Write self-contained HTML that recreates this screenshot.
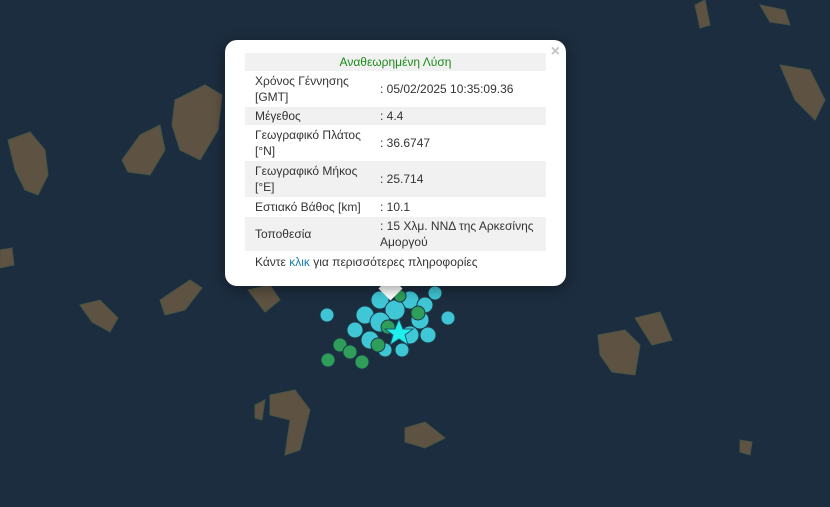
<!DOCTYPE html>
<html><head><meta charset="utf-8"><style>
body{margin:0;width:830px;height:507px;overflow:hidden;background:#1d3044;font-family:"Liberation Sans",Arial,sans-serif;}
#map{position:absolute;left:0;top:0}
.pop{position:absolute;left:225px;top:40px;width:341px;height:246px;background:#fff;border-radius:12px;box-shadow:0 3px 14px rgba(0,0,0,.4);}
.tip{position:absolute;left:382px;top:280px;width:17px;height:17px;background:#fff;transform:rotate(45deg);}
.x{position:absolute;right:6px;top:3px;color:#c3c3c3;font-size:16px;font-weight:bold}
table{position:absolute;left:20px;top:13px;width:301px;border-collapse:collapse;font-size:12px;color:#333;line-height:16px;table-layout:fixed}
td{padding:1px 0 1px 10px;vertical-align:middle}
tr.g td{background:#f1f1f1}
.h{text-align:center;color:#1a8a1a;height:16px;padding-left:0}
.foot{position:absolute;left:30px;top:215px;font-size:12px;color:#333}
.foot span{color:#1a7fa8}
</style></head><body>
<svg id="map" width="830" height="507">
<rect width="830" height="507" fill="#1c2d3f"/>
<g fill="#5e5242" stroke="#465444" stroke-width="1">
<path d="M8 140 L30 132 L45 150 L48 175 L38 195 L25 190 L15 170Z"/>
<path d="M175 100 L205 85 L222 95 L218 130 L200 160 L180 150 L172 125Z"/>
<path d="M140 135 L160 125 L165 150 L150 175 L128 172 L122 160Z"/>
<path d="M80 305 L100 300 L118 318 L110 332 L92 322Z"/>
<path d="M160 300 L190 280 L202 288 L185 310 L165 315Z"/>
<path d="M248 290 L270 285 L280 300 L265 312Z"/>
<path d="M598 335 L625 330 L640 345 L635 375 L612 372 L600 355Z"/>
<path d="M635 318 L660 312 L672 340 L652 345Z"/>
<path d="M780 65 L810 70 L825 100 L815 120 L795 100Z"/>
<path d="M760 5 L785 10 L790 25 L770 22Z"/>
<path d="M695 5 L705 0 L710 25 L700 28Z"/>
<path d="M405 428 L425 422 L445 438 L425 448 L405 442Z"/>
<path d="M740 440 L752 442 L750 455 L740 452Z"/>
<path d="M0 250 L12 248 L14 265 L0 268Z"/>
<path d="M270 395 L295 390 L310 410 L300 450 L285 455 L290 420 L270 415Z"/>
<path d="M255 405 L265 400 L262 420 L255 418Z"/>
</g>
<g stroke="#1b3a4a" stroke-width="1">
<circle cx="327" cy="315" r="7" fill="#3ec4d4"/>
<circle cx="448" cy="318" r="7" fill="#3ec4d4"/>
<circle cx="435" cy="293" r="7" fill="#3ec4d4"/>
<circle cx="380" cy="300" r="9" fill="#40c7d6"/>
<circle cx="410" cy="300" r="9" fill="#40c7d6"/>
<circle cx="425" cy="305" r="8" fill="#40c7d6"/>
<circle cx="365" cy="315" r="9" fill="#40c7d6"/>
<circle cx="395" cy="310" r="10" fill="#40c7d6"/>
<circle cx="420" cy="320" r="9" fill="#40c7d6"/>
<circle cx="380" cy="322" r="10" fill="#40c7d6"/>
<circle cx="355" cy="330" r="8" fill="#40c7d6"/>
<circle cx="410" cy="335" r="9" fill="#40c7d6"/>
<circle cx="428" cy="335" r="8" fill="#40c7d6"/>
<circle cx="370" cy="340" r="9" fill="#40c7d6"/>
<circle cx="385" cy="350" r="7" fill="#40c7d6"/>
<circle cx="402" cy="350" r="7" fill="#40c7d6"/>
<circle cx="400" cy="296" r="6" fill="#2e9e5a"/>
<circle cx="418" cy="313" r="7" fill="#2e9e5a"/>
<circle cx="388" cy="327" r="7" fill="#2e9e5a"/>
<circle cx="340" cy="345" r="7" fill="#2e9e5a"/>
<circle cx="350" cy="352" r="7" fill="#2e9e5a"/>
<circle cx="328" cy="360" r="7" fill="#2e9e5a"/>
<circle cx="362" cy="362" r="7" fill="#2e9e5a"/>
<circle cx="378" cy="345" r="7" fill="#2e9e5a"/>
</g>
<polygon points="399,319 403,329 413,329 405,335 408,345 399,339 390,345 393,335 385,329 395,329" fill="#1ff0ee" stroke="#1b5a6a"/>
</svg>
<div class="tip"></div>
<div class="pop"><div class="x">×</div>
<table>
<colgroup><col style="width:125px"><col></colgroup>
<tr class="g"><td colspan="2" class="h">Αναθεωρημένη Λύση</td></tr>
<tr><td style="height:34px">Χρόνος Γέννησης<br>[GMT]</td><td>: 05/02/2025 10:35:09.36</td></tr>
<tr class="g"><td>Μέγεθος</td><td>: 4.4</td></tr>
<tr><td style="height:34px">Γεωγραφικό Πλάτος<br>[°N]</td><td>: 36.6747</td></tr>
<tr class="g"><td style="height:34px">Γεωγραφικό Μήκος<br>[°E]</td><td>: 25.714</td></tr>
<tr><td style="height:18px">Εστιακό Βάθος [km]</td><td>: 10.1</td></tr>
<tr class="g"><td style="height:32px">Τοποθεσία</td><td>: 15 Χλμ. ΝΝΔ της Αρκεσίνης Αμοργού</td></tr>
</table>
<div class="foot">Κάντε <span>κλικ</span> για περισσότερες πληροφορίες</div>
</div>
</body></html>
